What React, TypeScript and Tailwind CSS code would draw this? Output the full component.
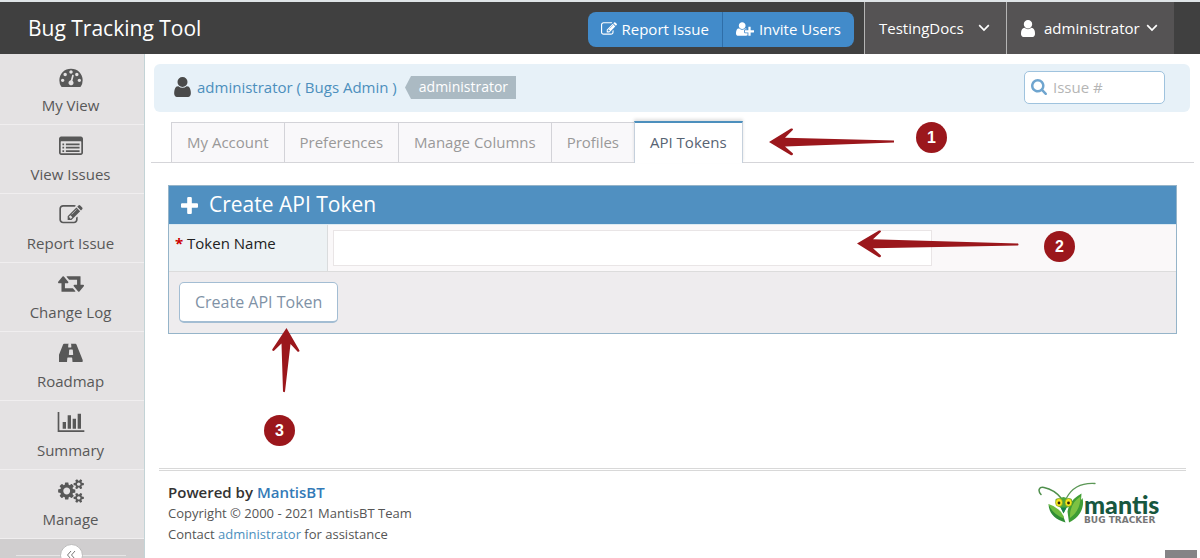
import React from "react";

type Glyph = { d: string; box: string };

const glyphs: Record<string, Glyph> = {
  user: {
    box: "256 128 1280 1536",
    d: "M1536 1399q0 109-62.5 187t-150.5 78h-854q-88 0-150.5-78t-62.5-187q0-85 8.5-160.5t31.5-152 58.5-131 94-89 134.5-34.5q131 128 313 128t313-128q76 0 134.5 34.5t94 89 58.5 131 31.5 152 8.5 160.5zm-256-887q0 159-112.5 271.5t-271.5 112.5-271.5-112.5-112.5-271.5 112.5-271.5 271.5-112.5 271.5 112.5 112.5 271.5z",
  },
  dashboard: {
    box: "0 128 1792 1536",
    d: "M384 1152q0-53-37.5-90.5t-90.5-37.5-90.5 37.5-37.5 90.5 37.5 90.5 90.5 37.5 90.5-37.5 37.5-90.5zm192-448q0-53-37.5-90.5t-90.5-37.5-90.5 37.5-37.5 90.5 37.5 90.5 90.5 37.5 90.5-37.5 37.5-90.5zm428 481l101-382q6-26-7.5-48.5t-38.5-29.5-48 6.5-30 39.5l-101 382q-60 5-107 43.5t-63 98.5q-20 77 20 146t117 89 146-20 89-117q16-60-6-117t-72-91zm660-33q0-53-37.5-90.5t-90.5-37.5-90.5 37.5-37.5 90.5 37.5 90.5 90.5 37.5 90.5-37.5 37.5-90.5zm-640-640q0-53-37.5-90.5t-90.5-37.5-90.5 37.5-37.5 90.5 37.5 90.5 90.5 37.5 90.5-37.5 37.5-90.5zm448 192q0-53-37.5-90.5t-90.5-37.5-90.5 37.5-37.5 90.5 37.5 90.5 90.5 37.5 90.5-37.5 37.5-90.5zm320 448q0 261-141 483-19 29-54 29h-1402q-35 0-54-29-141-221-141-483 0-182 71-348t191-286 286-191 348-71 348 71 286 191 191 286 71 348z",
  },
  list: {
    box: "0 128 1792 1408",
    d: "M256 1152h128v128h-128zM256 896h128v128h-128zM256 640h128v128h-128zM512 1152h1024v128h-1024zM512 896h1024v128h-1024zM512 640h1024v128h-1024zM1664 1344v-832q0-13-9.500-22.500t-22.500-9.500h-1472q-13 0-22.500 9.500t-9.500 22.500v832q0 13 9.500 22.500t22.500 9.500h1472q13 0 22.500-9.500t9.500-22.500zM1792 288v1056q0 66-47 113t-113 47h-1472q-66 0-113-47t-47-113v-1056q0-66 47-113t113-47h1472q66 0 113 47t47 113z",
  },
  edit: {
    box: "0 128 1792 1536",
    d: "M888 1184l116-116-152-152-116 116v56h96v96h56zm440-720q-16-16-33 1l-350 350q-17 17-1 33t33-1l350-350q17-17 1-33zm80 594v190q0 119-84.5 203.5t-203.5 84.5h-832q-119 0-203.5-84.5t-84.5-203.5v-832q0-119 84.5-203.5t203.5-84.5h832q63 0 117 25 15 7 18 23 3 17-9 29l-49 49q-14 14-32 8-23-6-45-6h-832q-66 0-113 47t-47 113v832q0 66 47 113t113 47h832q66 0 113-47t47-113v-126q0-13 9-22l64-64q15-15 35-7t20 29zm-96-738l288 288-672 672h-288v-288zm444 132l-92 92-288-288 92-92q28-28 68-28t68 28l152 152q28 28 28 68t-28 68z",
  },
  retweet: {
    box: "0 256 1920 1408",
    d: "M1280 1504q0 13-9.5 22.500t-22.500 9.500h-960q-8 0-13.500-2t-9-7-5.500-8-3-11.500-1-11.500v-600h-192q-26 0-45-19t-19-45q0-24 15-41l320-384q19-22 49-22t49 22l320 384q15 17 15 41 0 26-19 45t-45 19h-192v384h576q16 0 25 11l160 192q7 10 7 21zm640-416q0 24-15 41l-320 384q-20 23-49 23t-49-23l-320-384q-15-17-15-41 0-26 19-45t45-19h192v-384h-576q-16 0-25-12l-160-192q-7-9-7-20 0-13 9.500-22.500t22.500-9.500h960q8 0 13.500 2t9 7 5.500 8 3 11.500 1 11.500v600h192q26 0 45 19t19 45z",
  },
  road: {
    box: "120 200 1680 1380",
    d: "M1111 1001v-4l-24-320q-1-13-11-22.5t-23-9.5h-186q-13 0-23 9.5t-11 22.5l-24 320v4q-1 12 8 20t21 8h244q12 0 21-8t8-20zm672 451q0 73-46 73h-704q13 0 22-9.5t8-22.5l-20-256q-1-13-11-22.5t-23-9.5h-272q-13 0-23 9.5t-11 22.5l-20 256q-1 13 8 22.5t22 9.5h-704q-46 0-46-73 0-54 26-116l417-1044q8-19 26-33t38-14h339q-13 0-23 9.5t-11 22.5l-15 192q-1 14 8 23t22 9h166q13 0 22-9t8-23l-15-192q-1-13-11-22.5t-23-9.5h339q20 0 38 14t26 33l417 1044q26 62 26 116z",
  },
  chart: {
    box: "0 128 2048 1536",
    d: "M640 896v512h-256v-512h256zm384-512v1024h-256v-1024h256zm1024 1152v128h-2048v-1536h128v1408h1920zm-640-896v768h-256v-768h256zm384-384v1152h-256v-1152h256z",
  },
  cogs: {
    box: "0 0 1920 1792",
    d: "M896 896q0-106-75-181t-181-75-181 75-75 181 75 181 181 75 181-75 75-181zm768 512q0-52-38-90t-90-38-90 38-38 90q0 53 37.5 90.5t90.5 37.5 90.5-37.5 37.5-90.5zm0-1024q0-52-38-90t-90-38-90 38-38 90q0 53 37.5 90.5t90.5 37.5 90.5-37.5 37.5-90.5zm-384 421v185q0 10-7 19.5t-16 10.500l-155 24q-11 35-32 76 34 48 90 115 7 11 7 20 0 12-7 19-23 30-82.500 89.500t-78.500 59.500q-11 0-21-7l-115-90q-37 19-77 31-11 108-23 155-7 24-30 24h-186q-11 0-20-7.500t-10-17.500l-23-153q-34-10-75-31l-118 89q-7 7-20 7-11 0-21-8-144-133-144-160 0-9 7-19 10-14 41-53t47-61q-23-44-35-82l-152-24q-10-1-17-9.500t-7-19.500v-185q0-10 7-19.500t16-10.500l155-24q11-35 32-76-34-48-90-115-7-11-7-20 0-12 7-20 22-30 82-89t79-59q11 0 21 7l115 90q34-18 77-32 11-108 23-154 7-24 30-24h186q11 0 20 7.500t10 17.500l23 153q34 10 75 31l118-89q8-7 20-7 11 0 21 8 144 133 144 160 0 8-7 19-12 16-42 54t-45 60q23 48 34 82l152 23q10 2 17 10.500t7 19.500zm640 533v140q0 16-149 31-12 27-30 52 51 113 51 138 0 4-4 7-122 71-124 71-8 0-46-47t-52-68q-20 2-30 2t-30-2q-14 21-52 68t-46 47q-2 0-124-71-4-3-4-7 0-25 51-138-18-25-30-52-149-15-149-31v-140q0-16 149-31 13-29 30-52-51-113-51-138 0-4 4-7 4-2 35-20t59-34 30-16q8 0 46 46.500t52 67.500q20-2 30-2t30 2q51-71 92-112l6-2q4 0 124 70 4 3 4 7 0 25-51 138 17 23 30 52 149 15 149 31zm0-1024v140q0 16-149 31-12 27-30 52 51 113 51 138 0 4-4 7-122 71-124 71-8 0-46-47t-52-68q-20 2-30 2t-30-2q-14 21-52 68t-46 47q-2 0-124-71-4-3-4-7 0-25 51-138-18-25-30-52-149-15-149-31v-140q0-16 149-31 13-29 30-52-51-113-51-138 0-4 4-7 4-2 35-20t59-34 30-16q8 0 46 46.500t52 67.500q20-2 30-2t30 2q51-71 92-112l6-2q4 0 124 70 4 3 4 7 0 25-51 138 17 23 30 52 149 15 149 31z",
  },
  search: {
    box: "64 128 1664 1664",
    d: "M1216 832q0-185-131.5-316.5t-316.5-131.5-316.5 131.5-131.5 316.5 131.5 316.5 316.5 131.5 316.5-131.5 131.5-316.5zm512 832q0 52-38 90t-90 38q-54 0-90-38l-343-342q-179 124-399 124-143 0-273.5-55.5t-225-150-150-225-55.5-273.5 55.5-273.5 150-225 225-150 273.5-55.5 273.5 55.5 225 150 150 225 55.5 273.5q0 220-124 399l343 343q37 37 37 90z",
  },
  plus: {
    box: "192 128 1408 1408",
    d: "M1600 736v192q0 40-28 68t-68 28h-416v416q0 40-28 68t-68 28h-192q-40 0-68-28t-28-68v-416h-416q-40 0-68-28t-28-68v-192q0-40 28-68t68-28h416v-416q0-40 28-68t68-28h192q40 0 68 28t28 68v416h416q40 0 68 28t28 68z",
  },
  userPlus: {
    box: "0 128 2048 1536",
    d: "M704 896q-159 0-271.5-112.5t-112.5-271.5 112.5-271.5 271.5-112.5 271.5 112.5 112.5 271.5-112.5 271.5-271.5 112.5zm960 128h352q13 0 22.5 9.5t9.5 22.5v192q0 13-9.5 22.5t-22.5 9.5h-352v352q0 13-9.5 22.5t-22.5 9.5h-192q-13 0-22.5-9.5t-9.5-22.5v-352h-352q-13 0-22.5-9.5t-9.5-22.5v-192q0-13 9.5-22.5t22.5-9.5h352v-352q0-13 9.5-22.5t22.5-9.5h192q13 0 22.5 9.5t9.5 22.5v352zm-736 224q0 52 38 90t90 38h256v238q-68 50-171 50h-874q-121 0-194-69t-73-190q0-53 3.5-103.5t14-109 26.5-108.5 43-97.5 62-81 85.5-53.5 111.5-20q19 0 39 17 79 61 154.5 91.5t164.5 30.5 164.5-30.5 154.5-91.5q20-17 39-17 132 0 217 96h-223q-52 0-90 38t-38 90v192z",
  },
};

function Icon({ name, className }: { name: string; className: string }) {
  const g = glyphs[name];
  return (
    <svg viewBox={g.box} fill="currentColor" aria-hidden="true" className={`shrink-0 ${className}`}>
      <path d={g.d} />
    </svg>
  );
}

function Chevron() {
  return (
    <svg viewBox="0 0 12 8" className="h-2 w-3 shrink-0" fill="none" stroke="currentColor" strokeWidth="1.7" aria-hidden="true">
      <path d="M1.200 1.200 6 6l4.800-4.800" />
    </svg>
  );
}

const menu = [
  { label: "My View", icon: "dashboard", size: "w-6 h-5" },
  { label: "View Issues", icon: "list", size: "w-6 h-5" },
  { label: "Report Issue", icon: "edit", size: "w-6 h-5" },
  { label: "Change Log", icon: "retweet", size: "w-[26px] h-5" },
  { label: "Roadmap", icon: "road", size: "w-6 h-5" },
  { label: "Summary", icon: "chart", size: "w-7 h-5" },
  { label: "Manage", icon: "cogs", size: "w-[26px] h-6" },
];

const tabs = ["My Account", "Preferences", "Manage Columns", "Profiles", "API Tokens"];

function Badge({ n, className }: { n: number; className: string }) {
  return (
    <span
      className={`absolute flex size-[31px] items-center justify-center rounded-full bg-[#9b171c] font-['Liberation_Sans',sans-serif] text-base font-bold text-white ${className}`}
    >
      {n}
    </span>
  );
}

function ArrowShort({ className }: { className: string }) {
  return (
    <svg viewBox="0 0 126 28" className={`absolute h-7 w-[126px] ${className}`} fill="#9b171c" aria-hidden="true">
      <path d="M0 14 22 .6q2-.6 2 1.200L16 9.800 125 12.600v2L16 18.600 24 25.500q0 2.200-2 1.800Z" />
    </svg>
  );
}

function ArrowLong({ className }: { className: string }) {
  return (
    <svg viewBox="0 0 162 28" className={`absolute h-7 w-[162px] ${className}`} fill="#9b171c" aria-hidden="true">
      <path d="M0 13.500 22 .6q2-.6 2 1.200L16 9.300 161 13.400q1 1 0 2L16 18.300 24 25.500q0 2.200-2 1.800Z" />
    </svg>
  );
}

function ArrowUp({ className }: { className: string }) {
  return (
    <svg viewBox="0 0 28 65" className={`absolute h-[65px] w-7 ${className}`} fill="#9b171c" aria-hidden="true">
      <path d="M14.500 0 27.500 22.500q0 1.800-1.800 1.200L18.500 16 13 63.500q-.6 1.500-2 0L9.500 15.500 2 22.800Q0 23.200.2 21.500Z" />
    </svg>
  );
}

function MantisLogo() {
  return (
    <a href="#mantis" className="flex w-[122px] items-start text-[#17573f]">
      <svg viewBox="0 0 62 44" className="-mr-4 h-11 w-[62px] shrink-0" aria-hidden="true">
        <g fill="none" strokeLinecap="round">
          <path d="M3 12.500C-.5 8.500 1 4.500 6 5.500 13 7 19 11 23 16" stroke="#4f8f4c" strokeWidth="1.500" />
          <path d="M28.500 16C33 7.500 41 .5 57 1.500" stroke="#5b9756" strokeWidth="1.300" />
        </g>
        <path d="M10.500 22C11 31 16 37 27.500 40.500L25 33.500C20 32 14 28 10.500 22Z" fill="#2f8d35" />
        <path d="M10.500 22Q21 25 25.500 34L26 36.500Q14 32 10.500 22Z" fill="#6cbb3f" />
        <path d="M43.500 11.500C35 16 31 22 29.500 29.500L31 40.500C41 36 47 26 44.500 16L43 18Z" fill="#3f9d35" />
        <path d="M42.500 14.500C35 19 31.500 27 32 36 39 31 42.500 24 42.500 14.500Z" fill="#7cc243" />
        <path d="M17.500 18Q17 16 22 16.500 25.500 13.500 29 16.500 34.500 15.500 34 19 34 24 28.500 26L25.500 31 23 26Q18 24 17.500 18Z" fill="#4ea63a" />
        <path d="M22.500 25.500 25.500 31.500 28.500 25.500Z" fill="#15824a" />
        <ellipse cx="21" cy="20.500" rx="3.500" ry="4" fill="#f5e71c" stroke="#7b9a20" strokeWidth=".6" />
        <ellipse cx="30.500" cy="20.500" rx="3.500" ry="4" fill="#f5e71c" stroke="#7b9a20" strokeWidth=".6" />
        <circle cx="21" cy="21" r="1.400" fill="#33230d" />
        <circle cx="30.500" cy="21" r="1.400" fill="#33230d" />
      </svg>
      <span className="flex flex-col pt-[11px]">
        <span className="font-['Lato',sans-serif] text-[25px] font-black leading-[22px]">mantis</span>
        <span className="whitespace-nowrap font-['DejaVu_Sans',sans-serif] text-[9px] font-bold leading-[10px] text-[#777]">BUG TRACKER</span>
      </span>
    </a>
  );
}

export default function App() {
  return (
    <div className="relative flex h-screen flex-col overflow-hidden border-t-2 border-[#dfe4e7] bg-white font-['Open_Sans','Noto_Sans',sans-serif] text-[15px] text-[#393939]">
      <header className="flex h-[52px] shrink-0 items-stretch bg-[#404040] text-white">
        <a href="#home" className="mr-auto flex items-center pl-7 pt-[2px] text-[21px]">
          Bug Tracking Tool
        </a>
        <div className="mr-[10px] flex items-center pt-[2px]">
          <a href="#report" className="flex h-[35px] items-center gap-[5px] rounded-l-lg border-r border-[#2f6ea8] bg-[#428bca] px-[13px]">
            <Icon name="edit" className="h-[14px] w-4" />
            Report Issue
          </a>
          <a href="#invite" className="flex h-[35px] items-center gap-[5px] rounded-r-lg bg-[#428bca] px-[13px]">
            <Icon name="userPlus" className="h-[14px] w-[18px]" />
            Invite Users
          </a>
        </div>
        <button className="flex w-[142px] items-center justify-between border-l border-[#b5b5b5] bg-[#555354] pl-[14px] pr-4">
          TestingDocs
          <Chevron />
        </button>
        <button className="mr-[26px] flex w-[168px] items-center border-l border-[#b5b5b5] bg-[#555354] pl-[14px]">
          <Icon name="user" className="mr-[9px] h-[17px] w-[14px]" />
          <span className="mr-[6px]">administrator</span>
          <Chevron />
        </button>
      </header>

      <div className="flex min-h-0 flex-1">
        <nav className="w-[145px] shrink-0 border-r border-[#c3d3d6] bg-[#e4e2e3] pt-[2px] text-[#585858]">
          <ul>
            {menu.map((m) => (
              <li key={m.label} className="border-b border-[#f0eeef]">
                <a href={`#${m.label}`} className="flex h-[68px] flex-col items-center gap-[6px] pr-[3px] pt-[9px]">
                  <span className="flex h-6 items-center">
                    <Icon name={m.icon} className={m.size} />
                  </span>
                  <span className="leading-5">{m.label}</span>
                </a>
              </li>
            ))}
          </ul>
          <div className="flex h-8 items-center bg-[#d0cecf] pl-4 pr-[18px]">
            <span className="h-px flex-1 bg-[#e6e6e6]" />
            <button aria-label="Collapse menu" className="flex size-[23px] items-center justify-center rounded-full border border-[#bbb] bg-white text-[#777]">
              <svg viewBox="0 0 10 10" className="size-[10px]" fill="none" stroke="currentColor" aria-hidden="true">
                <path d="M5 1 1.500 5 5 9M9 1 5.500 5 9 9" />
              </svg>
            </button>
            <span className="h-px flex-1 bg-[#e6e6e6]" />
          </div>
        </nav>

        <main className="relative flex min-w-0 flex-1 flex-col pt-[10px]">
          <div className="ml-[9px] mr-[10px] flex h-12 items-center rounded-md bg-[#e7f1f8] pb-[2px] pl-5 pr-[25px]">
            <Icon name="user" className="mr-[6px] h-5 w-[17px] text-[#4a4a4a]" />
            <a href="#account" className="text-[#4c8fbd]">administrator ( Bugs Admin )</a>
            <span className="ml-2 flex items-center">
              <svg viewBox="0 0 6 23" className="h-[23px] w-[6px]" fill="#abbac3" aria-hidden="true">
                <path d="M6 0v23L0 11.500Z" />
              </svg>
              <span className="h-[23px] bg-[#abbac3] px-2 text-sm leading-[22px] text-white">administrator</span>
            </span>
            <label className="ml-auto flex h-[33px] w-[141px] items-center gap-[6px] rounded-[5px] border border-[#9fc3de] bg-white pl-[6px]">
              <Icon name="search" className="size-4 text-[#6fa5cf]" />
              <input aria-label="Issue #" placeholder="Issue #" className="w-full min-w-0 bg-transparent outline-none placeholder:text-[#b5b5b5]" />
            </label>
          </div>

          <div className="ml-[6px] mr-[6px] mt-[9px] flex items-end border-b border-[#d5d5d9] pl-5">
            {tabs.map((t) => (
              <a
                key={t}
                href={`#${t}`}
                className={
                  t === "API Tokens"
                    ? "-mb-px flex h-[42px] items-center border border-b-0 border-t-2 border-[#c5d0dc] border-t-[#4c8fbd] bg-white px-[15px] pb-[2px] text-[#576373] shadow-[0_-2px_3px_rgba(0,0,0,0.12)]"
                    : "flex h-10 items-center border-l border-t border-[#d3d3d8] bg-[#f9f8fa] px-[15px] text-[#999]"
                }
              >
                {t}
              </a>
            ))}
          </div>

          <form className="ml-[23px] mr-[23px] mt-[22px] border border-[#95b4c9]" onSubmit={(e) => e.preventDefault()}>
            <h4 className="flex h-[38px] items-center gap-[11px] bg-[#5090c1] pl-3 text-[21px] text-white">
              <Icon name="plus" className="size-[17px]" />
              Create API Token
            </h4>
            <div className="flex h-[48px] border-b border-[#dcdcdc] border-t border-t-[#dceaf2]">
              <label htmlFor="token-name" className="w-[159px] shrink-0 border-r border-[#dadcdd] bg-[#edf2f4] pl-[6px] pt-2 leading-5 text-[#222]">
                <span className="font-bold text-[#c00]">*</span> Token Name
              </label>
              <div className="flex flex-1 items-center bg-[#faf8f9] pl-[5px]">
                <input id="token-name" className="h-9 w-[71%] border border-[#e9e5e6] bg-white px-2 outline-none" />
              </div>
            </div>
            <div className="flex h-[61px] items-center bg-[#eeecee] pl-[10px]">
              <button className="h-[41px] rounded-[5px] border border-b-2 border-[#a3bdd3] bg-white px-[15px] text-base text-[#7f92a6]">Create API Token</button>
            </div>
          </form>

          <footer className="ml-[14px] mr-[14px] mt-auto flex items-start justify-between border-t-[3px] border-double border-[#d8d8d8] pb-[13px] pl-[9px] pr-[26px] pt-[11px]">
            <div className="text-[13px] leading-[21px] text-[#555]">
              <p className="text-[15px] font-semibold text-[#333]">
                Powered by <a href="#mantisbt" className="text-[#337ab7]">MantisBT</a>
              </p>
              <p>Copyright © 2000 - 2021 MantisBT Team</p>
              <p>
                Contact <a href="#contact" className="text-[#4c8fbd]">administrator</a> for assistance
              </p>
            </div>
            <MantisLogo />
          </footer>

          <ArrowShort className="left-[624px] top-[74px]" />
          <Badge n={1} className="left-[771px] top-[68px]" />
          <ArrowLong className="left-[712px] top-[176px]" />
          <Badge n={2} className="left-[899px] top-[177px]" />
          <ArrowUp className="left-[127px] top-[274px]" />
          <Badge n={3} className="left-[119px] top-[361px]" />
        </main>
      </div>
      <button aria-label="Scroll to top" className="absolute bottom-0 right-[3px] h-2 w-8 bg-[#858486]" />
    </div>
  );
}
